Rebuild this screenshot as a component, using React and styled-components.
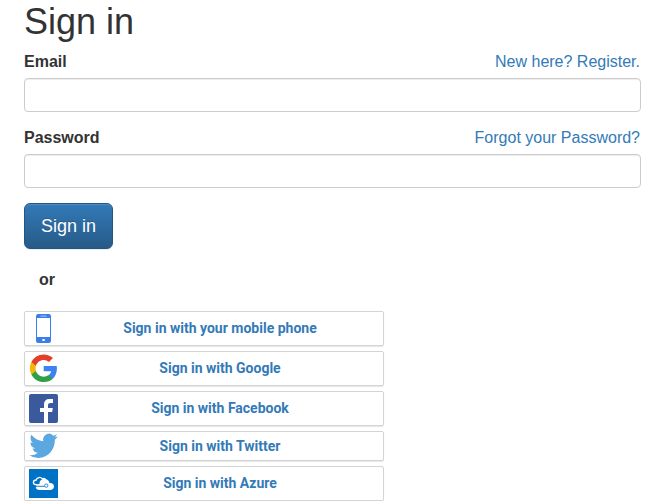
import React from "react";
import styled, { createGlobalStyle } from "styled-components";

const GlobalStyle = createGlobalStyle`
  * { box-sizing: border-box; }
  body {
    margin: 0;
    background: #fff;
    color: #333;
    font: 16px/23px "Liberation Sans", Arial, sans-serif;
    overflow: hidden;
  }
`;

const Page = styled.main`
  width: 641px;
  padding-left: 24px;
`;

const Title = styled.h1`
  margin: 0 0 6px;
  height: 44px;
  font-size: 36px;
  font-weight: 400;
  line-height: 44px;
`;

const Field = styled.div`
  margin-bottom: 14px;
`;

const FieldHeader = styled.div`
  display: flex;
  justify-content: space-between;
  height: 28px;
  padding-right: 1px;
`;

const Label = styled.label`
  font-weight: 700;
`;

const Link = styled.a`
  color: #337ab7;
  text-decoration: none;
`;

const Input = styled.input`
  display: block;
  width: 100%;
  height: 34px;
  padding: 6px 12px;
  border: 1px solid #ccc;
  border-radius: 4px;
  box-shadow: inset 0 1px 1px rgba(0, 0, 0, 0.075);
  font: inherit;
`;

const SubmitButton = styled.button`
  display: block;
  width: 89px;
  height: 46px;
  margin-top: 15px;
  padding: 0;
  border: 1px solid #245580;
  border-radius: 6px;
  background: linear-gradient(to bottom, #337ab7 0%, #265a88 100%);
  box-shadow: inset 0 1px 0 rgba(255, 255, 255, 0.15), 0 1px 1px rgba(0, 0, 0, 0.075);
  color: #fff;
  font: 18px/24px "Liberation Sans", Arial, sans-serif;
  text-shadow: 0 -1px 0 rgba(0, 0, 0, 0.2);
`;

const Divider = styled.div`
  margin: 19px 0 20px 15px;
  font-weight: 700;
`;

const Providers = styled.div`
  display: flex;
  flex-direction: column;
  gap: 5px;
  width: 360px;
`;

const Provider = styled.a`
  display: flex;
  align-items: center;
  height: ${(p) => p.$height}px;
  padding: 0 1px 0 4px;
  border: 1px solid #d4d4d4;
  border-radius: 2px;
  box-shadow: 0 1px 1px rgba(0, 0, 0, 0.1);
  color: #337ab7;
  text-decoration: none;

  svg {
    display: block;
    flex: none;
  }
`;

const ProviderLabel = styled.span`
  flex: 1;
  height: 19px;
  font: 700 14px/19px Roboto, sans-serif;
  text-align: center;
`;

const PhoneIcon = () => (
  <svg width="29" height="29" viewBox="0 0 29 29">
    <rect x="7" y="0" width="15" height="29" rx="2.2" fill="#3b7ded" />
    <rect x="8" y="4" width="13" height="19" fill="#fff" />
    <rect x="11.5" y="1.6" width="6" height="1" fill="#a9c8f8" />
    <rect x="13.4" y="24.9" width="2.4" height="2.2" rx="0.6" fill="#fff" />
  </svg>
);

const GoogleIcon = () => (
  <svg width="29" height="29" viewBox="0 0 29 29">
    <g transform="translate(.9 .5) scale(1.15)">
      <path fill="#3e82f1" d="M23.49 12.27c0-.79-.07-1.54-.19-2.27H12v4.51h6.47c-.29 1.48-1.14 2.73-2.4 3.58v3h3.86c2.26-2.09 3.56-5.17 3.56-8.82z" />
      <path fill="#2f9f48" d="M12 24c3.24 0 5.95-1.08 7.93-2.91l-3.86-3c-1.08.72-2.45 1.16-4.07 1.16-3.13 0-5.78-2.11-6.73-4.96H1.29v3.09C3.26 21.3 7.31 24 12 24z" />
      <path fill="#f4b60a" d="M5.27 14.29c-.25-.72-.38-1.49-.38-2.29s.14-1.57.38-2.29V6.62H1.29C.47 8.24 0 10.06 0 12s.47 3.76 1.29 5.38l3.98-3.09z" />
      <path fill="#e23e2b" d="M12 4.75c1.77 0 3.35.61 4.6 1.8l3.42-3.42C17.95 1.19 15.24 0 12 0 7.31 0 3.26 2.7 1.29 6.62l3.98 3.09C6.22 6.86 8.87 4.75 12 4.75z" />
    </g>
  </svg>
);

const FacebookIcon = () => (
  <svg width="29" height="29" viewBox="0 0 29 29">
    <rect width="29" height="29" rx="2" fill="#3b5a9d" />
    <path fill="#fff" d="M15 29V18h-4v-4h4v-3.3C15 7 17.1 5 20.6 5H24v4h-2.2c-2 0-2.8.8-2.8 2.4V14h4.8l-.6 4H19v11z" />
  </svg>
);

const TwitterIcon = () => (
  <svg width="29" height="26" viewBox="0 0 29 26">
    <path
      fill="#5aa8df"
      transform="translate(.4 -2.1) scale(1.18 1.245)"
      d="M23.953 4.57a10 10 0 01-2.825.775 4.958 4.958 0 002.163-2.723c-.951.555-2.005.959-3.127 1.184a4.92 4.92 0 00-8.384 4.482C7.69 8.095 4.067 6.13 1.64 3.162a4.822 4.822 0 00-.666 2.475c0 1.71.87 3.213 2.188 4.096a4.904 4.904 0 01-2.228-.616v.06a4.923 4.923 0 003.946 4.827 4.996 4.996 0 01-2.212.085 4.936 4.936 0 004.604 3.417 9.867 9.867 0 01-6.102 2.105c-.39 0-.779-.023-1.17-.067a13.995 13.995 0 007.557 2.209c9.053 0 13.998-7.496 13.998-13.985 0-.21 0-.42-.015-.63A9.935 9.935 0 0024 4.59z"
    />
  </svg>
);

const AzureIcon = () => (
  <svg width="29" height="29" viewBox="0 0 29 29">
    <rect width="29" height="29" fill="#0072c6" />
    <path fill="none" stroke="#fff" strokeWidth="1.3" d="M8.5 15.6H7c-3.6-.4-3.4-4.5.2-4.6.4-2.8 4.4-3.4 6.2-1.2 1.4-.6 2.6-.1 3.2.8" />
    <path fill="#fff" d="M10.4 20.9c-2.1 0-3.6-1.3-3.6-3 0-1.8 1.5-3.1 3.7-2.9-.1-3 2-4.9 5-4.9 2.7 0 4.6 1.5 5 3.9 2.7-.3 4.5 1.3 4.5 3.4 0 2.2-1.7 3.5-4 3.5z" />
    <path fill="none" stroke="#0072c6" strokeWidth=".9" d="M6 17.3h9.6" />
    <circle cx="17.2" cy="16.6" r="1.7" fill="#fff" stroke="#0072c6" strokeWidth=".8" />
  </svg>
);

const providers = [
  { label: "Sign in with your mobile phone", Icon: PhoneIcon, height: 35 },
  { label: "Sign in with Google", Icon: GoogleIcon, height: 35 },
  { label: "Sign in with Facebook", Icon: FacebookIcon, height: 35 },
  { label: "Sign in with Twitter", Icon: TwitterIcon, height: 30 },
  { label: "Sign in with Azure", Icon: AzureIcon, height: 35 },
];

export default function App() {
  return (
    <Page>
      <GlobalStyle />
      <Title>Sign in</Title>
      <Field>
        <FieldHeader>
          <Label htmlFor="email">Email</Label>
          <Link href="#">New here? Register.</Link>
        </FieldHeader>
        <Input id="email" type="email" />
      </Field>
      <Field>
        <FieldHeader>
          <Label htmlFor="password">Password</Label>
          <Link href="#">Forgot your Password?</Link>
        </FieldHeader>
        <Input id="password" type="password" />
      </Field>
      <SubmitButton type="button">Sign in</SubmitButton>
      <Divider>or</Divider>
      <Providers>
        {providers.map(({ label, Icon, height }) => (
          <Provider key={label} href="#" $height={height}>
            <Icon />
            <ProviderLabel>{label}</ProviderLabel>
          </Provider>
        ))}
      </Providers>
    </Page>
  );
}
